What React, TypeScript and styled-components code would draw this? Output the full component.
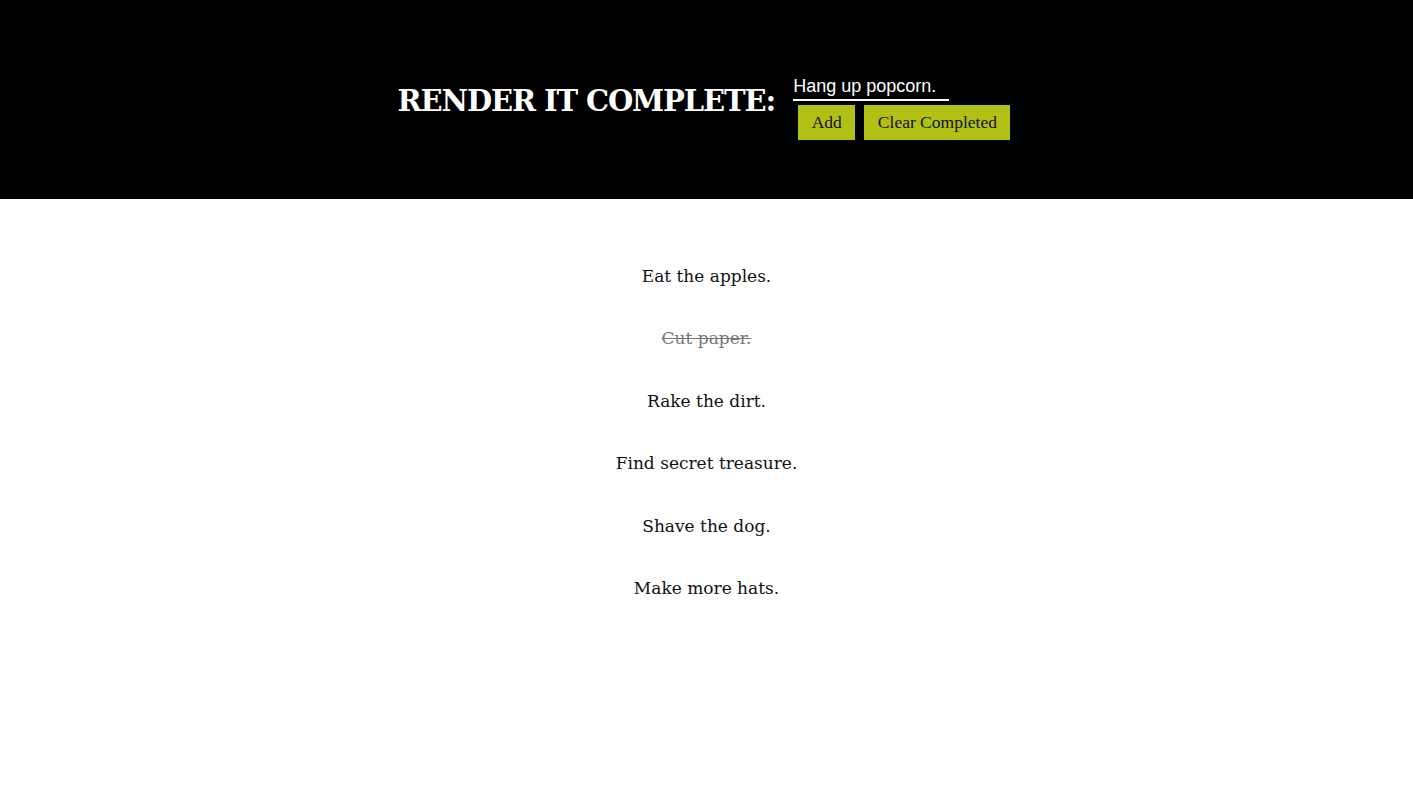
import React from "react";
import styled, { createGlobalStyle } from "styled-components";

const Global = createGlobalStyle`
  html, body { margin: 0; padding: 0; background: #fff; }
  body { font-family: "DejaVu Serif", serif; }
`;

const Header = styled.header`
  background: #000;
  height: 199px;
  padding-right: 5px;
  display: flex;
  align-items: center;
  justify-content: center;
  gap: 18px;
`;

const Title = styled.h1`
  margin: 0;
  color: #fff;
  font-family: "DejaVu Serif", serif;
  font-weight: bold;
  font-size: 29px;
  letter-spacing: -1.1px;
  transform: translateY(1px);
`;

const Form = styled.form`
  display: flex;
  flex-direction: column;
  align-items: flex-start;
  transform: translateY(8px);
`;

const Input = styled.input`
  background: transparent;
  border: none;
  border-bottom: 2px solid #fff;
  color: #fff;
  font-family: "Liberation Sans", Arial, sans-serif;
  font-size: 18px;
  width: 156px;
  padding: 0 0 2px 0;
  outline: none;
`;

const Buttons = styled.div`
  display: flex;
  gap: 9px;
  margin: 4px 0 0 5px;
`;

const Button = styled.button`
  background: #b2c014;
  border: none;
  height: 35px;
  padding: 0 13.5px;
  font-family: "Liberation Serif", "Times New Roman", serif;
  font-size: 17.5px;
  color: #111;
  cursor: pointer;
`;

const List = styled.ul`
  list-style: none;
  margin: 0;
  padding: 66px 0 0;
  display: flex;
  flex-direction: column;
  align-items: center;
  gap: 39.4px;
`;

const Item = styled.li<{ $done?: boolean }>`
  font-family: "DejaVu Serif", serif;
  font-size: 17px;
  line-height: 23px;
  color: ${(p) => (p.$done ? "#777" : "#111")};
  text-decoration: ${(p) => (p.$done ? "line-through" : "none")};
`;

const todos = [
  { text: "Eat the apples.", done: false },
  { text: "Cut paper.", done: true },
  { text: "Rake the dirt.", done: false },
  { text: "Find secret treasure.", done: false },
  { text: "Shave the dog.", done: false },
  { text: "Make more hats.", done: false },
];

export default function App() {
  return (
    <>
      <Global />
      <Header>
        <Title>RENDER IT COMPLETE:</Title>
        <Form onSubmit={(e) => e.preventDefault()}>
          <Input defaultValue="Hang up popcorn." />
          <Buttons>
            <Button type="submit">Add</Button>
            <Button type="button">Clear Completed</Button>
          </Buttons>
        </Form>
      </Header>
      <List>
        {todos.map((t) => (
          <Item key={t.text} $done={t.done}>
            {t.text}
          </Item>
        ))}
      </List>
    </>
  );
}
